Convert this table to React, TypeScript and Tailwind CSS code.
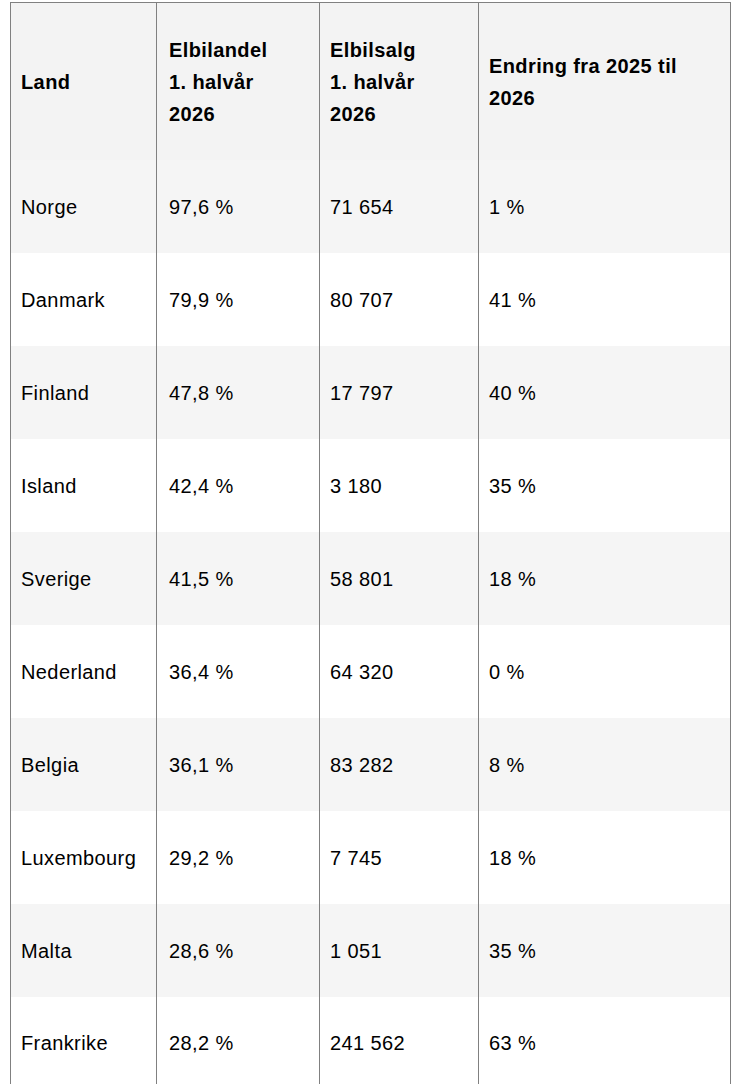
const rows: [string, string, string, string][] = [
  ["Norge", "97,6 %", "71 654", "1 %"],
  ["Danmark", "79,9 %", "80 707", "41 %"],
  ["Finland", "47,8 %", "17 797", "40 %"],
  ["Island", "42,4 %", "3 180", "35 %"],
  ["Sverige", "41,5 %", "58 801", "18 %"],
  ["Nederland", "36,4 %", "64 320", "0 %"],
  ["Belgia", "36,1 %", "83 282", "8 %"],
  ["Luxembourg", "29,2 %", "7 745", "18 %"],
  ["Malta", "28,6 %", "1 051", "35 %"],
  ["Frankrike", "28,2 %", "241 562", "63 %"],
];

const cell = "border-x border-[#808080] pl-[10px] pr-2 pt-[1px] text-left align-middle";
const cell2 = "border-x border-[#808080] pl-[12px] pr-2 pt-[1px] text-left align-middle";

export default function App() {
  return (
    <div className="min-h-screen bg-white pl-[10px] pt-[2px] font-['Liberation_Sans',Arial,sans-serif] text-[20px] leading-[32px] tracking-[0.4px] text-black">
      <table className="w-[720px] table-fixed border-collapse border border-[#808080]">
        <colgroup>
          <col className="w-[146px]" />
          <col className="w-[163px]" />
          <col className="w-[159px]" />
          <col className="w-[252px]" />
        </colgroup>
        <thead>
          <tr className="h-[157px] bg-[#f3f3f3] font-bold">
            <th className={cell}>Land</th>
            <th className={cell2}>
              Elbilandel
              <br />
              1. halvår
              <br />
              2026
            </th>
            <th className={cell}>
              Elbilsalg
              <br />
              1. halvår
              <br />
              2026
            </th>
            <th className={cell}>
              Endring fra 2025 til
              <br />
              2026
            </th>
          </tr>
        </thead>
        <tbody>
          {rows.map((r, i) => (
            <tr key={r[0]} className={i % 2 === 0 ? "h-[93px] bg-[#f5f5f5]" : "h-[93px] bg-white"}>
              <td className={cell}>{r[0]}</td>
              <td className={cell2}>{r[1]}</td>
              <td className={cell}>{r[2]}</td>
              <td className={cell}>{r[3]}</td>
            </tr>
          ))}
        </tbody>
      </table>
    </div>
  );
}
